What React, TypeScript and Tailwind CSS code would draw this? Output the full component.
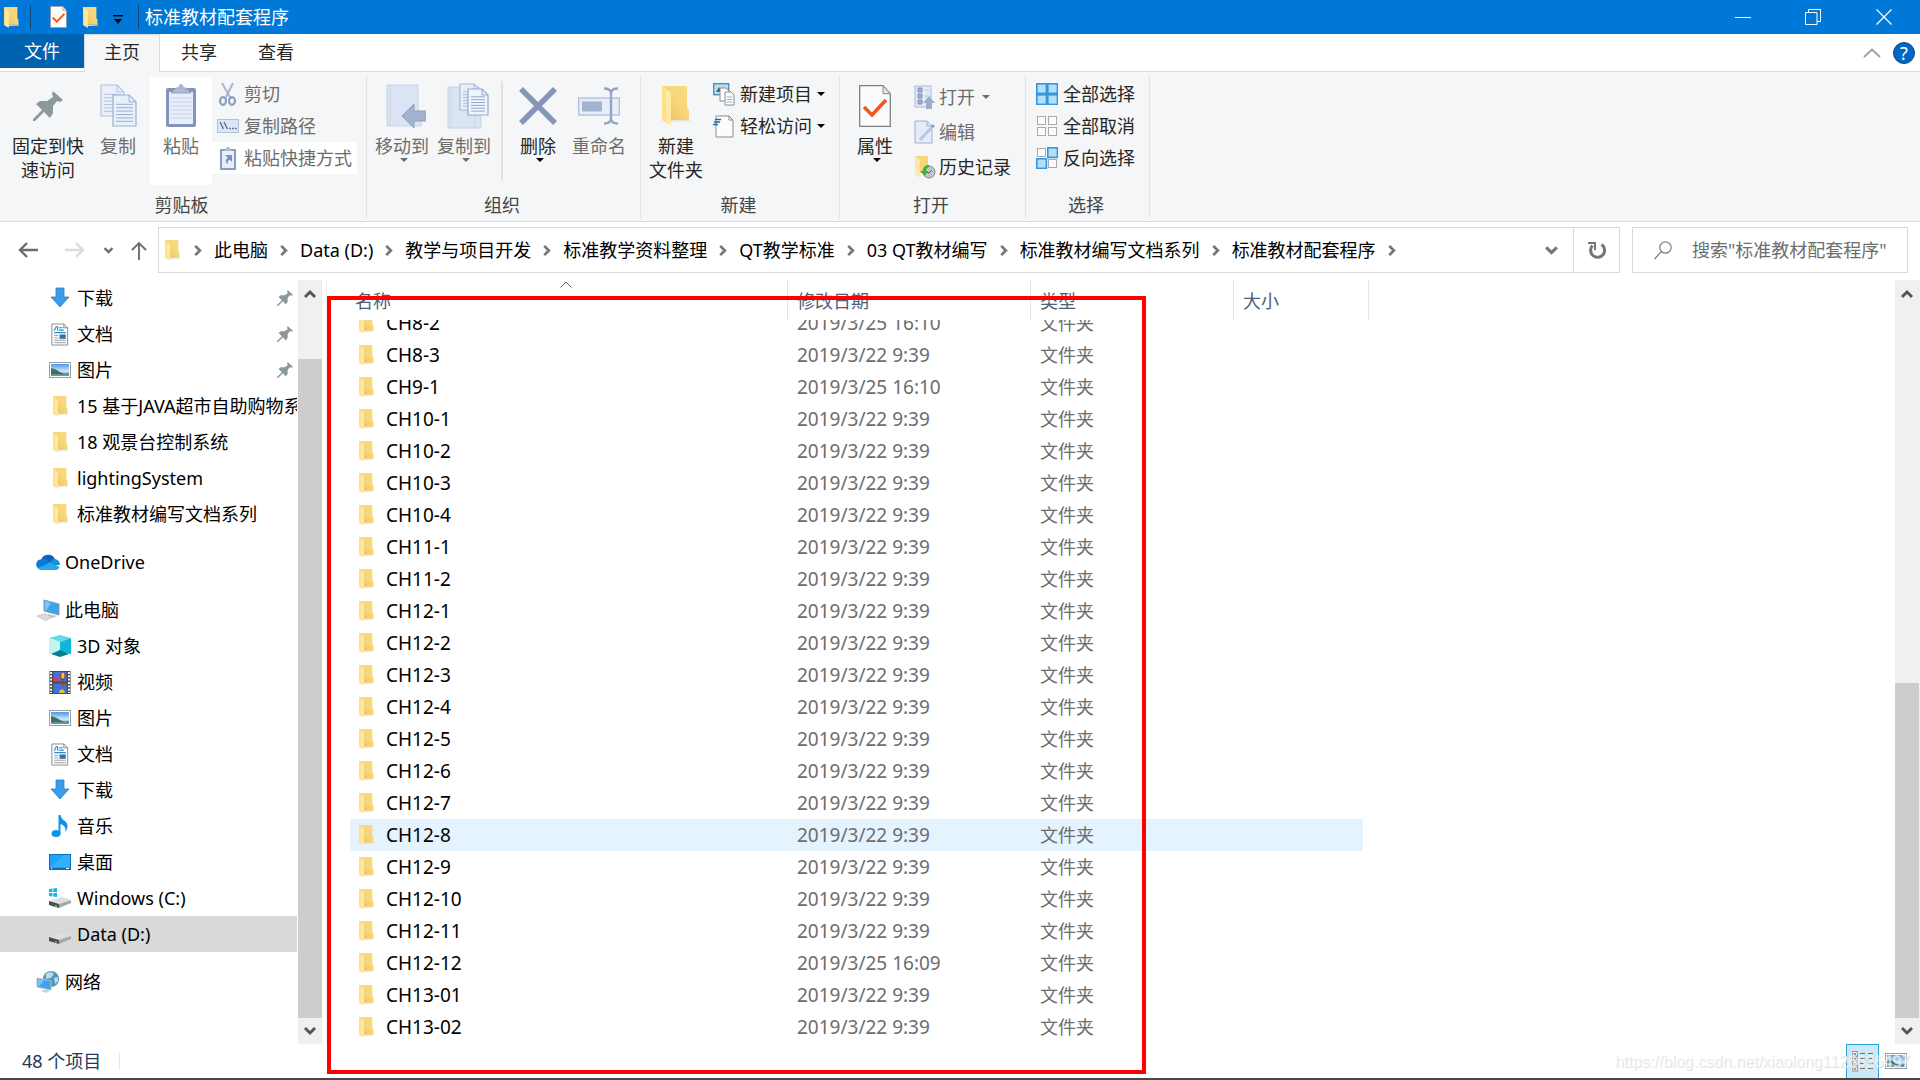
import React, { type ReactNode } from "react";

/* ---------- icons ---------- */

function Folder({ className = "h-[21px] w-[15px]" }: { className?: string }) {
  return (
    <svg viewBox="0 0 28 40" preserveAspectRatio="none" className={`shrink-0 ${className}`} aria-hidden="true">
      <defs>
        <linearGradient id="folderBack" x1="0" y1="1" x2="1" y2="0">
          <stop offset="0" stopColor="#e9bf57" />
          <stop offset="0.5" stopColor="#f6d577" />
          <stop offset="1" stopColor="#fbdc84" />
        </linearGradient>
      </defs>
      <path d="M9 34h20v1l-20 1z" fill="#e4e2dc" />
      <path d="M0 0h25v22l2 2v10H8z" fill="url(#folderBack)" />
      <path d="M0 0l9 7v33l-9-6z" fill="#ffe9a4" />
      <path d="M0 0l4 3v34l-4-3z" fill="#ffe08a" />
    </svg>
  );
}

function Pin({ className }: { className: string }) {
  return (
    <svg viewBox="0 0 30 30" className={`shrink-0 ${className}`} aria-hidden="true">
      <path d="M20 0l10 9-3 2-3-1-4 5v7l-3 5-6-6-9 9-2 0 0-2 9-9-6-6 4-3 7 0 6-4-1-3z" fill="#8d989e" />
    </svg>
  );
}

function CheckDoc({ className }: { className: string }) {
  return (
    <svg viewBox="0 0 32 42" preserveAspectRatio="none" className={`shrink-0 ${className}`} aria-hidden="true">
      <path d="M.7.7H24l7.3 8v32.6H.7z" fill="#fcfcfd" stroke="#7f8083" strokeWidth="1.3" />
      <path d="M24 .7v8h7.3z" fill="#e3e5e8" stroke="#8b8c8f" />
      <path d="M5 22l8 8L27 15" fill="none" stroke="#f2561b" strokeWidth="3.6" />
    </svg>
  );
}

function Paper({ x, y, w, h, stroke = "#9bafd2", fill = "#e9f0fa" }: { x: number; y: number; w: number; h: number; stroke?: string; fill?: string }) {
  const c = w * 0.3;
  const rows = [0.3, 0.41, 0.52, 0.63, 0.74, 0.85];
  return (
    <g stroke={stroke}>
      <path d={`M${x} ${y}h${w - c}l${c} ${c}v${h - c}h${-w}z`} fill={fill} strokeWidth="1.2" />
      <path d={`M${x + w - c} ${y}v${c}h${c}`} fill="none" />
      {rows.map((r) => (
        <path key={r} d={`M${x + 3} ${y + h * r}h${w - 6}`} strokeWidth="1" />
      ))}
    </g>
  );
}

const CopyIcon = () => (
  <svg viewBox="0 0 37 43" className="h-[43px] w-[37px]" aria-hidden="true">
    <Paper x={1} y={1} w={23} h={31} stroke="#b3c2dd" />
    <Paper x={13} y={11} w={23} h={31} />
  </svg>
);

const PasteIcon = () => (
  <svg viewBox="0 0 30 43" className="h-[43px] w-[30px]" aria-hidden="true">
    <rect x="0" y="4" width="30" height="39" rx="2" fill="#8495b8" />
    <rect x="3" y="8" width="24" height="32" fill="#e8effa" />
    <path d="M4 14h22M4 18h22M4 22h22M4 26h22M4 30h22M4 34h22" stroke="#c5d3e8" />
    <path d="M5 9l5-5h3c0-5 4-5 4 0h3l5 5z" fill="#aebbd3" stroke="#93a3c2" />
  </svg>
);

const MoveIcon = () => (
  <svg viewBox="-8 0 48 44" className="h-[44px] w-[48px]" aria-hidden="true">
    <path d="M1 1h31v24l3 3v14H1z" fill="#dae4f2" stroke="#c6d4e8" />
    <path d="M4 1v41" stroke="#c9d6ea" />
    <path d="M16 32l12-12v7h12v10H28v7z" fill="#a3b2cf" stroke="#8fa1c2" />
  </svg>
);

const CopyToIcon = () => (
  <svg viewBox="-8 0 50 46" className="h-[46px] w-[50px]" aria-hidden="true">
    <path d="M1 4h31v24l2 3v14H1z" fill="#dae4f2" stroke="#c6d4e8" />
    <path d="M4 4v41M28 32v13" stroke="#c9d6ea" />
    <Paper x={13} y={1} w={20} h={26} stroke="#a9bad9" />
    <Paper x={21} y={6} w={20} h={26} stroke="#93a9ce" fill="#f0f5fc" />
  </svg>
);

const DeleteIcon = () => (
  <svg viewBox="0 0 38 38" className="h-[38px] w-[38px]" aria-hidden="true">
    <path d="M2 2l34 34M36 2L2 36" stroke="#8495b5" strokeWidth="5.5" />
  </svg>
);

const RenameIcon = () => (
  <svg viewBox="0 0 42 38" className="h-[38px] w-[42px]" aria-hidden="true">
    <rect x=".7" y="11" width="40.6" height="17" fill="#e6eefa" stroke="#a9bad9" strokeWidth="1.2" />
    <rect x="4" y="14.500" width="20" height="10" fill="#a3b2cf" />
    <path d="M26 1.500q6 0 7 4 1-4 7-4M33 5v28M26 36.500q6 0 7-4 1 4 7 4" fill="none" stroke="#93a3c4" strokeWidth="2.4" />
  </svg>
);

const Scissors = () => (
  <svg viewBox="0 0 22 24" className="h-[24px] w-[22px]" aria-hidden="true">
    <path d="M5 1l9 16M16 1L8 17" stroke="#a9b6d0" strokeWidth="2" />
    <ellipse cx="6" cy="19" rx="3" ry="3.800" fill="none" stroke="#8e9fc1" strokeWidth="2.200" />
    <ellipse cx="15" cy="19" rx="3" ry="3.800" fill="none" stroke="#8e9fc1" strokeWidth="2.200" />
  </svg>
);

const PathIcon = () => (
  <svg viewBox="0 0 22 14" className="h-[14px] w-[22px]" aria-hidden="true">
    <rect x=".5" y=".5" width="21" height="13" fill="#dce7f5" stroke="#b1c0da" />
    <path d="M3 3l3.500 7M7 3l3.500 7" stroke="#5e6f93" strokeWidth="1.400" />
    <path d="M12 9.500h1.800M15 9.500h1.800M18 9.500h1.800" stroke="#5e6f93" strokeWidth="1.600" />
  </svg>
);

const ShortcutIcon = () => (
  <svg viewBox="0 0 22 24" className="h-[24px] w-[22px]" aria-hidden="true">
    <rect x="3" y="3" width="16" height="21" rx="1" fill="#8a9bbd" />
    <rect x="5" y="5" width="12" height="17" fill="#e8effa" />
    <path d="M6 5l3-2c0-3 4-3 4 0l3 2z" fill="#aebbd3" />
    <path d="M8 9h7v7l-2-2c-2 0-3 2-2 4-3-1-3-5 0-6z" fill="#7d90b6" />
  </svg>
);

const NewItemIcon = () => (
  <svg viewBox="0 0 22 23" className="h-[23px] w-[22px]" aria-hidden="true">
    <rect x=".7" y=".7" width="15" height="11" fill="#b8dff5" stroke="#4b91b8" strokeWidth="1.400" />
    <path d="M3 9l3-5 3 5z" fill="#3a6b54" />
    <path d="M7 5h6l3 3v10H7z" fill="#fff" stroke="#8b8c8f" />
    <path d="M12 9h6l3 3v10h-9z" fill="#fff" stroke="#8b8c8f" />
    <path d="M13.500 14h6M13.500 16.500h6M13.500 19h6" stroke="#8eb5e0" />
  </svg>
);

const EasyIcon = () => (
  <svg viewBox="0 0 22 23" className="h-[23px] w-[22px]" aria-hidden="true">
    <path d="M3 1h13l4 4v17H3z" fill="#fcfcfd" stroke="#8b8c8f" />
    <path d="M16 1v4h4" fill="none" stroke="#8b8c8f" />
    <path d="M2 4.500h6M1 7h6M0 9.500h5" stroke="#1768ae" strokeWidth="1.300" />
  </svg>
);

const OpenIcon = () => (
  <svg viewBox="0 0 22 24" className="h-[24px] w-[22px]" aria-hidden="true">
    <rect x="1" y="1" width="16" height="21" fill="#e3ebf7" stroke="#a9b9d6" />
    <path d="M4 3h4v4H4zM4 9h4v4H4zM4 15h4v4H4z" fill="#a3b2cf" stroke="#7f91b5" />
    <path d="M11 5h4M11 11h4" stroke="#b6c4dd" />
    <path d="M15 11l6 7h-3v6h-6v-6H9z" fill="#9dadcb" />
  </svg>
);

const EditIcon = () => (
  <svg viewBox="0 0 22 24" className="h-[24px] w-[22px]" aria-hidden="true">
    <path d="M1 1h12l5 5v17H1z" fill="#e3ecf8" stroke="#9fb2d3" />
    <path d="M13 1v5h5" fill="none" stroke="#9fb2d3" />
    <path d="M6 20L19 6" stroke="#b9c8e0" strokeWidth="3" />
    <path d="M18 7l2-2" stroke="#8ea0c2" strokeWidth="3" />
  </svg>
);

const HistoryIcon = () => (
  <svg viewBox="0 0 22 24" className="h-[24px] w-[22px]" aria-hidden="true">
    <path d="M1 1h13v17H5z" fill="#f6d577" />
    <path d="M1 1l5 4v18l-5-4z" fill="#ffe9a4" />
    <circle cx="15" cy="17" r="6" fill="#c3c6c9" stroke="#83878b" />
    <path d="M12 17l3 1 3-3" fill="none" stroke="#55595d" />
    <path d="M15 10c-4 0-6 2-6 6H6l5 5 3-5h-2c0-2 1-3 3-4z" fill="#35b440" />
  </svg>
);

function Tiles({ on }: { on: [boolean, boolean, boolean, boolean] }) {
  const spots = [[1, 1], [12, 1], [1, 12], [12, 12]];
  return (
    <svg viewBox="0 0 22 22" className="h-[22px] w-[22px]" aria-hidden="true">
      {spots.map(([x, y], i) => (
        <rect
          key={i}
          x={on[i] ? x - 0.2 : x + 0.5}
          y={on[i] ? y - 0.2 : y + 0.5}
          width={on[i] ? 9.6 : 8}
          height={on[i] ? 9.6 : 8}
          fill={on[i] ? "#b5defa" : "#fcfcfd"}
          stroke={on[i] ? "#3595de" : "#a9abad"}
          strokeWidth={on[i] ? 1.6 : 1}
        />
      ))}
    </svg>
  );
}

const DownloadIcon = () => (
  <svg viewBox="0 0 22 22" className="h-[22px] w-[22px]" aria-hidden="true">
    <path d="M7 1h8v9h5l-9 10-9-10h5z" fill="#3b9be9" stroke="#2b80c8" strokeWidth=".8" />
  </svg>
);

const DocIcon = () => (
  <svg viewBox="0 0 22 24" className="h-[23px] w-[22px]" aria-hidden="true">
    <path d="M2.500 1H15l4 4v18H2.500z" fill="#fdfdfd" stroke="#8a8c8f" />
    <path d="M15 1v4h4" fill="none" stroke="#8a8c8f" />
    <path d="M5 8l2-4h1.500v4M10 5h4M10 7.500h5M5 10h12" stroke="#2a8fd0" fill="none" strokeWidth="1.200" />
    <path d="M5 13h4M5 15.500h4M5 18h12M5 20.500h12" stroke="#9a9c9f" />
    <rect x="10.500" y="12" width="6.500" height="4.500" fill="#3c719f" />
  </svg>
);

const PictureIcon = () => (
  <svg viewBox="0 0 22 16" className="h-[16px] w-[22px]" aria-hidden="true">
    <defs>
      <linearGradient id="sky" x1="0" y1="0" x2="0" y2="1">
        <stop offset="0" stopColor="#4d97e8" />
        <stop offset=".6" stopColor="#cfe6fa" />
        <stop offset="1" stopColor="#5690b5" />
      </linearGradient>
    </defs>
    <rect x=".5" y=".5" width="21" height="15" fill="#fff" stroke="#9b9da0" />
    <rect x="2" y="2" width="18" height="12" fill="url(#sky)" />
    <path d="M2 6q5 1 9 4t9 1v1.500H2z" fill="#3e7260" />
  </svg>
);

const OneDriveIcon = () => (
  <svg viewBox="0 0 24 16" className="h-[16px] w-[24px]" aria-hidden="true">
    <path d="M5 6a7.500 7.500 0 0 1 14-1l-5 6z" fill="#0a63bd" />
    <path d="M5 5.500Q8 4 11 6l5 3-13 6A5 5 0 0 1 5 5.500z" fill="#0c7ad5" />
    <path d="M15 7q2-2.500 5-1.800Q24 7 24 11l-9 1z" fill="#1490df" />
    <path d="M2 14L14 8.500 23.500 13q-1 3-4 3H5q-2 0-3-2z" fill="#28a8ea" />
  </svg>
);

const ComputerIcon = () => (
  <svg viewBox="0 0 24 22" className="h-[22px] w-[24px]" aria-hidden="true">
    <path d="M8 1l15 4v11L8 12z" fill="#3ba4f0" stroke="#8e9aa5" />
    <path d="M9 2l6 2-5 8-1-.5z" fill="#7cc4f7" />
    <path d="M12 15l10 2-6 2-5-2z" fill="#c5cad0" />
    <path d="M1 17l8-2 7 3-6 3.500z" fill="#d9dce0" stroke="#abb1b8" strokeWidth=".6" />
  </svg>
);

const CubeIcon = () => (
  <svg viewBox="0 0 22 22" className="h-[22px] w-[22px]" aria-hidden="true">
    <path d="M0 3l11-3 11 3-11 4z" fill="#63d8e6" />
    <path d="M0 3l11 4v10L0 19z" fill="#c4f3f2" />
    <path d="M22 3L11 7v10l11 2z" fill="#12b6dc" />
    <path d="M2 19l9-4 9 4-9 3z" fill="#087f91" />
  </svg>
);

const VideoIcon = () => (
  <svg viewBox="0 0 22 24" className="h-[23px] w-[22px]" aria-hidden="true">
    <rect width="22" height="24" fill="#4a4a4c" />
    <path d="M1.700 1v22M20.300 1v22" stroke="#fff" strokeWidth="2" strokeDasharray="2 1.500" />
    <rect x="4" y="1" width="14" height="10" fill="#4174d8" />
    <rect x="4" y="13" width="14" height="10" fill="#3f72d6" />
    <path d="M4 8q4-4 8 3H4z" fill="#c13f79" />
    <circle cx="14" cy="5" r="3.200" fill="#d43a22" />
    <ellipse cx="14" cy="5" rx="1.500" ry="3.200" fill="#f3cf2b" />
    <path d="M12 8h4l-1 2h-2z" fill="#2f6b35" />
    <path d="M12 13h5l-2 3h-1z" fill="#d43a22" />
    <path d="M10 23q0-4 3-4t3 4z" fill="#eebb25" />
  </svg>
);

const MusicIcon = () => (
  <svg viewBox="0 0 22 22" className="h-[22px] w-[22px]" aria-hidden="true">
    <ellipse cx="7" cy="18.500" rx="4.500" ry="3.500" fill="#0f93e8" />
    <path d="M9.500 0h2q1 4 5 6.500 4 4 0 10.500 1-6-5-8v10h-2z" fill="#0f93e8" />
  </svg>
);

const DesktopIcon = () => (
  <svg viewBox="0 0 22 16" className="h-[16px] w-[22px]" aria-hidden="true">
    <rect x=".5" y=".5" width="21" height="15" fill="#1ea2fb" stroke="#0c6fb8" />
    <path d="M1 13L15 1h6v12z" fill="#35aefd" />
    <path d="M1 14.500h20" stroke="#0c6fb8" />
    <path d="M2 14.500h1M17 14.500h3" stroke="#fff" />
  </svg>
);

function DriveIcon({ windows = false }: { windows?: boolean }) {
  return (
    <svg viewBox="0 0 22 22" className="h-[22px] w-[22px]" aria-hidden="true">
      <path d="M0 14l13-4 9 3-12 4z" fill="#dddee0" />
      <path d="M0 14l10 3v4L0 18z" fill="#4a4c4e" />
      <path d="M10 17l12-4v3l-12 5z" fill="#a6a8ab" />
      <path d="M6 18.500l2 .6" stroke="#49d04e" strokeWidth="1.500" />
      {windows && <path d="M0 2l3.500-.5V5H0zM4.300 1.400L8 1v4H4.300zM0 6h3.500v3.500L0 9zM4.300 6H8v4l-3.700-.4z" fill="#14b4ec" />}
    </svg>
  );
}

const NetworkIcon = () => (
  <svg viewBox="0 0 24 22" className="h-[22px] w-[24px]" aria-hidden="true">
    <circle cx="15" cy="8" r="8" fill="#4d97bb" />
    <path d="M10 3q4-4 8 0l-3 4-5 1zM18 7l4-1v4l-3 3z" fill="#b5dcea" />
    <path d="M1 7l14 3v9L1 16z" fill="#3ba4f0" stroke="#b5bdc5" />
    <path d="M2 8l6 1.500L3 15.500H2z" fill="#79c3f7" />
    <path d="M5 20l5-2 4 2-4 2z" fill="#cdd1d6" />
  </svg>
);

function Chevron({ dir, className }: { dir: "right" | "down" | "up"; className: string }) {
  const d = dir === "right" ? "M3 2l5 5-5 5" : dir === "down" ? "M2 4l5 5 5-5" : "M2 10l5-5 5 5";
  return (
    <svg viewBox={dir === "right" ? "2 0 8 14" : "0 0 14 14"} className={`shrink-0 ${className}`} aria-hidden="true">
      <path d={d} fill="none" stroke="currentColor" strokeWidth="2.900" />
    </svg>
  );
}

function Caret({ className = "text-black" }: { className?: string }) {
  return (
    <svg viewBox="0 0 8 4" className={`h-[4px] w-[8px] shrink-0 ${className}`} aria-hidden="true">
      <path d="M0 0h8L4 4z" fill="currentColor" />
    </svg>
  );
}

/* ---------- ribbon ---------- */

function RibbonGroup({ label, className, children }: { label: string; className: string; children: ReactNode }) {
  return (
    <section aria-label={label} className={`flex shrink-0 flex-col border-r border-[#e2e3e4] pt-[2px] ${className}`}>
      <div className="flex h-[108px]">{children}</div>
      <div className="mt-2 pr-[3px] text-center leading-6 text-[#444]">{label}</div>
    </section>
  );
}

function BigButton({
  icon, lines, className, disabled = false, caret = false,
}: { icon: ReactNode; lines: string[]; className: string; disabled?: boolean; caret?: boolean }) {
  return (
    <button type="button" disabled={disabled} className={`flex h-[108px] shrink-0 flex-col items-center pt-[6px] ${disabled ? "text-[#6d6d6d]" : "text-[#262626]"} ${className}`}>
      <span className="flex h-[45px] items-center justify-center">{icon}</span>
      <span className="mt-[6px] flex flex-col whitespace-nowrap leading-6">
        {lines.map((l) => <span key={l}>{l}</span>)}
      </span>
      {caret && <Caret className={disabled ? "ml-1 text-[#6d6d6d]" : "ml-1 text-black"} />}
    </button>
  );
}

function SmallButton({
  icon, label, className = "h-8 gap-[5px]", disabled = false, caret = false,
}: { icon: ReactNode; label: string; className?: string; disabled?: boolean; caret?: boolean }) {
  return (
    <button type="button" disabled={disabled} className={`flex items-center whitespace-nowrap ${disabled ? "text-[#6d6d6d]" : "text-[#262626]"} ${className}`}>
      <span className="flex w-[22px] shrink-0 justify-center">{icon}</span>
      <span>{label}</span>
      {caret && <Caret className={disabled ? "ml-1 text-[#6d6d6d]" : "text-black"} />}
    </button>
  );
}

function Ribbon() {
  return (
    <div className="flex h-[150px] shrink-0 border-b border-[#d9dadb] bg-[#f5f6f7] pt-[3px] pb-[3px]">
      <RibbonGroup label="剪贴板" className="w-[367px]">
        <BigButton className="w-24" icon={<Pin className="h-[30px] w-[30px]" />} lines={["固定到快", "速访问"]} />
        <BigButton className="w-11" disabled icon={<CopyIcon />} lines={["复制"]} />
        <BigButton className="ml-[10px] w-[62px] bg-white" disabled icon={<PasteIcon />} lines={["粘贴"]} />
        <div className="mt-px flex w-[145px] flex-col">
          <SmallButton className="h-8 gap-[5px] pl-[5px]" disabled icon={<Scissors />} label="剪切" />
          <SmallButton className="h-8 gap-[5px] pl-[5px]" disabled icon={<PathIcon />} label="复制路径" />
          <SmallButton className="h-8 gap-[5px] bg-white pl-[5px]" disabled icon={<ShortcutIcon />} label="粘贴快捷方式" />
        </div>
      </RibbonGroup>
      <RibbonGroup label="组织" className="w-[274px]">
        <BigButton className="ml-1 w-[62px]" disabled caret icon={<MoveIcon />} lines={["移动到"]} />
        <BigButton className="w-[62px]" disabled caret icon={<CopyToIcon />} lines={["复制到"]} />
        <div className="mx-[6px] mt-1 h-[100px] w-[2px] bg-[#e0e1e3]" />
        <BigButton className="w-[58px]" caret icon={<DeleteIcon />} lines={["删除"]} />
        <BigButton className="w-[64px]" disabled icon={<RenameIcon />} lines={["重命名"]} />
      </RibbonGroup>
      <RibbonGroup label="新建" className="w-[199px]">
        <BigButton className="ml-[3px] w-16" icon={<Folder className="h-[40px] w-[28px]" />} lines={["新建", "文件夹"]} />
        <div className="mt-px ml-[5px] flex flex-col">
          <SmallButton caret icon={<NewItemIcon />} label="新建项目" />
          <SmallButton caret icon={<EasyIcon />} label="轻松访问" />
        </div>
      </RibbonGroup>
      <RibbonGroup label="打开" className="w-[186px]">
        <BigButton className="ml-1 w-[62px]" caret icon={<CheckDoc className="h-[42px] w-[32px]" />} lines={["属性"]} />
        <div className="mt-[2px] ml-2 flex flex-col">
          <SmallButton className="h-[35px] gap-[3px]" disabled caret icon={<OpenIcon />} label="打开" />
          <SmallButton className="h-[35px] gap-[3px]" disabled icon={<EditIcon />} label="编辑" />
          <SmallButton className="h-[35px] gap-[3px]" icon={<HistoryIcon />} label="历史记录" />
        </div>
      </RibbonGroup>
      <RibbonGroup label="选择" className="w-[124px]">
        <div className="mt-px ml-[10px] flex flex-col">
          <SmallButton icon={<Tiles on={[true, true, true, true]} />} label="全部选择" />
          <SmallButton icon={<Tiles on={[false, false, false, false]} />} label="全部取消" />
          <SmallButton icon={<Tiles on={[false, true, true, false]} />} label="反向选择" />
        </div>
      </RibbonGroup>
    </div>
  );
}

/* ---------- window chrome ---------- */

function TitleBar() {
  return (
    <header className="flex h-[34px] shrink-0 items-center bg-[#0078d7] pl-1 text-white">
      <Folder />
      <span className="ml-[11px] h-6 w-px bg-[#10467a]" />
      <button type="button" aria-label="属性" className="ml-[19px]"><CheckDoc className="h-[22px] w-[17px]" /></button>
      <button type="button" aria-label="新建文件夹" className="ml-4"><Folder /></button>
      <button type="button" aria-label="自定义快速访问工具栏" className="ml-[15px] pt-1">
        <svg viewBox="0 0 10 9" className="h-[9px] w-[10px]" aria-hidden="true"><path d="M0 .7h10" stroke="#000" strokeWidth="1.400" /><path d="M1 4h8L5 9z" /></svg>
      </button>
      <span className="ml-[15px] h-6 w-px bg-[#10467a]" />
      <h1 className="ml-[6px] leading-6">标准教材配套程序</h1>
      <div className="ml-auto flex h-full">
        <button type="button" aria-label="最小化" className="flex w-[70px] items-center justify-center">
          <span className="h-px w-4 bg-white" />
        </button>
        <button type="button" aria-label="还原" className="flex w-[70px] items-center justify-center">
          <svg viewBox="0 0 16 16" className="h-4 w-4" aria-hidden="true"><path d="M.5 3.500h11.500v12H.5zM3.500 3.500v-3h12v12H12" fill="none" stroke="#fff" /></svg>
        </button>
        <button type="button" aria-label="关闭" className="flex w-[72px] items-center justify-center">
          <svg viewBox="0 0 16 16" className="h-4 w-4" aria-hidden="true"><path d="M.5.5l15 15M15.500.5l-15 15" stroke="#fff" strokeWidth="1.200" /></svg>
        </button>
      </div>
    </header>
  );
}

function TabBar() {
  return (
    <div className="flex h-[38px] shrink-0 border-b border-[#d9dadb] bg-white text-[#262626]">
      <button type="button" className="h-[34px] w-[84px] bg-[#0063b1] text-white">文件</button>
      <button type="button" className="-mb-px h-[38px] w-[76px] border-x border-t border-[#d9dadb] bg-[#f5f6f7] pb-[3px]">主页</button>
      <button type="button" className="w-[78px] pb-[2px]">共享</button>
      <button type="button" className="w-[76px] pb-[2px]">查看</button>
      <div className="ml-auto flex items-center gap-[12px] pr-[5px]">
        <button type="button" aria-label="最小化功能区">
          <svg viewBox="0 0 18 10" className="h-[10px] w-[18px]" aria-hidden="true"><path d="M1 9l8-7.500L17 9" fill="none" stroke="#a0a0a0" strokeWidth="2" /></svg>
        </button>
        <button type="button" aria-label="帮助" className="flex h-[22px] w-[22px] items-center justify-center rounded-full border border-[#0a4a86] bg-[#0067c5] text-[18px] leading-none text-white">?</button>
      </div>
    </div>
  );
}

const crumbs = ["此电脑", "Data (D:)", "教学与项目开发", "标准教学资料整理", "QT教学标准", "03 QT教材编写", "标准教材编写文档系列", "标准教材配套程序"];

function AddressRow() {
  return (
    <div className="flex h-[58px] shrink-0 items-center bg-white pt-[2px] pr-3 pb-[4px] pl-[18px]">
      <button type="button" aria-label="返回" className="text-[#6d6d6d]">
        <svg viewBox="0 0 20 16" className="h-4 w-5" aria-hidden="true"><path d="M20 8H2M9 1L2 8l7 7" fill="none" stroke="currentColor" strokeWidth="2.400" /></svg>
      </button>
      <button type="button" aria-label="前进" disabled className="ml-[27px] text-[#dcdcdc]">
        <svg viewBox="0 0 20 16" className="h-4 w-5" aria-hidden="true"><path d="M0 8h18M11 1l7 7-7 7" fill="none" stroke="currentColor" strokeWidth="2.400" /></svg>
      </button>
      <button type="button" aria-label="最近浏览的位置" className="ml-[18px] text-[#6d6d6d]"><Chevron dir="down" className="h-[11px] w-[11px]" /></button>
      <button type="button" aria-label="上移" className="ml-[17px] text-[#6d6d6d]">
        <svg viewBox="0 0 16 19" className="h-[19px] w-4" aria-hidden="true"><path d="M8 19V2M1 9l7-7 7 7" fill="none" stroke="currentColor" strokeWidth="1.900" /></svg>
      </button>
      <div className="ml-[11px] flex h-[46px] min-w-0 flex-1 items-center border border-[#d9d9d9] pl-[6px]">
        <Folder className="h-[21px] w-[15px]" />
        <nav aria-label="地址" className="ml-[2px] flex min-w-0 flex-1 items-center overflow-hidden whitespace-nowrap text-black">
          {crumbs.map((c) => (
            <span key={c} className="flex items-center">
              <Chevron dir="right" className="mx-3 h-[13px] w-[8px] text-[#767676]" />
              <a href="#" className="leading-6">{c}</a>
            </span>
          ))}
          <Chevron dir="right" className="ml-3 h-[13px] w-[8px] text-[#767676]" />
        </nav>
        <button type="button" aria-label="以前的位置" className="mr-[14px] text-[#767676]"><Chevron dir="down" className="h-[15px] w-[15px]" /></button>
        <button type="button" aria-label="刷新" className="flex h-full w-[46px] items-center justify-center border-l border-[#d9d9d9] text-[#767676]">
          <svg viewBox="0 0 18 18" className="h-[18px] w-[18px]" aria-hidden="true"><path d="M4.500 4.500a7 7 0 1 0 9-1" fill="none" stroke="currentColor" strokeWidth="3" /><path d="M0 1h8v8h-2V3H0z" fill="currentColor" /></svg>
        </button>
      </div>
      <label className="ml-3 flex h-[46px] w-[276px] shrink-0 items-center border border-[#d9d9d9] pl-[21px]">
        <svg viewBox="0 0 18 19" className="h-[19px] w-[18px] shrink-0" aria-hidden="true"><circle cx="11.500" cy="6.500" r="5.700" fill="none" stroke="#808080" strokeWidth="1.200" /><path d="M7.500 10.500L.5 18" stroke="#808080" strokeWidth="1.300" /></svg>
        <input type="text" aria-label="搜索" placeholder={'搜索"标准教材配套程序"'} className="ml-[20px] min-w-0 flex-1 bg-transparent outline-none placeholder:text-[#6d6d6d]" />
      </label>
    </div>
  );
}

/* ---------- navigation pane ---------- */

function NavItem({ icon, label, root = false, pinned = false, selected = false }: { icon: ReactNode; label: string; root?: boolean; pinned?: boolean; selected?: boolean }) {
  return (
    <a href="#" className={`flex h-9 items-center whitespace-nowrap pr-1 ${root ? "gap-[5px] pl-9" : "gap-[6px] pl-[49px]"} ${selected ? "bg-[#d9d9d9]" : ""}`}>
      <span className={`flex shrink-0 justify-center ${root ? "w-6" : "w-[22px]"}`}>{icon}</span>
      <span>{label}</span>
      {pinned && <span className="ml-auto"><Pin className="h-4 w-4" /></span>}
    </a>
  );
}

function NavPane() {
  return (
    <nav aria-label="导航窗格" className="w-[297px] shrink-0 overflow-hidden text-black">
      <NavItem icon={<DownloadIcon />} label="下载" pinned />
      <NavItem icon={<DocIcon />} label="文档" pinned />
      <NavItem icon={<PictureIcon />} label="图片" pinned />
      <NavItem icon={<Folder />} label="15 基于JAVA超市自助购物系统" />
      <NavItem icon={<Folder />} label="18 观景台控制系统" />
      <NavItem icon={<Folder />} label="lightingSystem" />
      <NavItem icon={<Folder />} label="标准教材编写文档系列" />
      <div className="mt-3"><NavItem root icon={<OneDriveIcon />} label="OneDrive" /></div>
      <div className="mt-3">
        <NavItem root icon={<ComputerIcon />} label="此电脑" />
        <NavItem icon={<CubeIcon />} label="3D 对象" />
        <NavItem icon={<VideoIcon />} label="视频" />
        <NavItem icon={<PictureIcon />} label="图片" />
        <NavItem icon={<DocIcon />} label="文档" />
        <NavItem icon={<DownloadIcon />} label="下载" />
        <NavItem icon={<MusicIcon />} label="音乐" />
        <NavItem icon={<DesktopIcon />} label="桌面" />
        <NavItem icon={<DriveIcon windows />} label="Windows (C:)" />
        <NavItem selected icon={<DriveIcon />} label="Data (D:)" />
      </div>
      <div className="mt-3"><NavItem root icon={<NetworkIcon />} label="网络" /></div>
    </nav>
  );
}

function ScrollBar({ thumb }: { thumb: string }) {
  return (
    <div className="flex w-6 shrink-0 flex-col bg-[#f0f0f0] text-[#555]">
      <button type="button" aria-label="向上滚动" className="flex h-[28px] shrink-0 items-center justify-center"><Chevron dir="up" className="h-[14px] w-[14px]" /></button>
      <div className="flex flex-1 flex-col justify-end"><div className={`bg-[#cdcdcd] ${thumb}`} /></div>
      <button type="button" aria-label="向下滚动" className="flex h-[26px] shrink-0 items-center justify-center"><Chevron dir="down" className="h-[14px] w-[14px]" /></button>
    </div>
  );
}

/* ---------- file list ---------- */

const names = [
  "CH8-2", "CH8-3", "CH9-1", "CH10-1", "CH10-2", "CH10-3", "CH10-4", "CH11-1", "CH11-2", "CH12-1", "CH12-2", "CH12-3",
  "CH12-4", "CH12-5", "CH12-6", "CH12-7", "CH12-8", "CH12-9", "CH12-10", "CH12-11", "CH12-12", "CH13-01", "CH13-02",
];
const dates: Record<string, string> = { "CH8-2": "2019/3/25 16:10", "CH9-1": "2019/3/25 16:10", "CH12-12": "2019/3/25 16:09" };

function FileList() {
  return (
    <main className="relative flex min-w-0 flex-1 flex-col border-l border-[#f0f0f0]">
      <div className="flex h-10 shrink-0 text-[#4c607a]">
        <button type="button" className="relative w-[461px] border-r border-[#e5e5e5] pt-px pl-7 text-left">
          名称
          <svg viewBox="0 0 12 7" className="absolute top-[1px] left-[233px] h-[7px] w-3" aria-hidden="true"><path d="M.5 6.500L6 1l5.500 5.500" fill="none" stroke="#666" /></svg>
        </button>
        <button type="button" className="w-[243px] border-r border-[#e5e5e5] pt-px pl-[9px] text-left">修改日期</button>
        <button type="button" className="w-[203px] border-r border-[#e5e5e5] pt-px pl-[9px] text-left">类型</button>
        <button type="button" className="w-[135px] border-r border-[#e5e5e5] pt-px pl-[9px] text-left">大小</button>
      </div>
      <div className="flex min-h-0 flex-1 flex-col justify-end overflow-hidden pb-px pl-[23px]">
        <table className="w-[1013px] shrink-0 table-fixed border-collapse text-left">
          <colgroup>
            <col className="w-[447px]" />
            <col className="w-[243px]" />
            <col />
          </colgroup>
          <tbody>
            {names.map((n) => (
              <tr key={n} className={`h-8 ${n === "CH12-8" ? "bg-[#e5f3ff]" : ""}`}>
                <td className="p-0 pl-[9px]">
                  <a href="#" className="flex items-center gap-3 text-[19px] leading-8 text-black"><Folder />{n}</a>
                </td>
                <td className="p-0 text-[19px] leading-8 text-[#6d6d6d]">{dates[n] ?? "2019/3/22 9:39"}</td>
                <td className="p-0 leading-8 text-[#6d6d6d]">文件夹</td>
              </tr>
            ))}
          </tbody>
        </table>
      </div>
      <div aria-hidden="true" className="pointer-events-none absolute top-4 -bottom-[30px] left-0 z-10 w-[819px] border-4 border-[#ff0000]" />
    </main>
  );
}

function StatusBar() {
  return (
    <footer className="relative flex h-9 shrink-0 items-center border-b-2 border-[#444648] bg-white pl-[22px] text-[#1e395b]">
      <span>48 个项目</span>
      <span className="ml-[18px] h-[17px] w-px bg-[#e8e8e8]" />
      <div className="ml-auto flex h-full items-center pr-[13px]">
        <button type="button" aria-label="详细信息" className="flex h-full w-[33px] items-center justify-center border border-b-0 border-[#26a0da] bg-[#cce8f6]">
          <svg viewBox="0 0 22 21" className="h-[21px] w-[22px]" aria-hidden="true">
            {[0, 5, 10, 15].map((y) => <rect key={y} x=".8" y={y + 0.6} width="4.500" height="4.500" fill="#fff" stroke="#8b8d90" />)}
            <path d="M2 3h2" stroke="#4a78c0" strokeWidth="1.500" /><path d="M2 8h2" stroke="#4b9b55" strokeWidth="1.500" /><path d="M2 13h2" stroke="#c23b32" strokeWidth="1.500" /><path d="M2 18h2" stroke="#4b9b55" strokeWidth="1.500" />
            <path d="M8 2.500h5M16 2.500h5M8 7.500h5M16 7.500h5M8 12.500h5M16 12.500h5M8 17.500h5M16 17.500h5" stroke="#6b6d70" />
          </svg>
        </button>
        <button type="button" aria-label="大图标" className="ml-[6px]"><PictureIcon /></button>
      </div>
      <span className="pointer-events-none absolute top-[6px] right-[10px] font-['Liberation_Sans',sans-serif] text-[16px] leading-6 text-white/60 [text-shadow:1px_1px_1px_#dcdcdc]">https://blog.csdn.net/xiaolong1126626497</span>
    </footer>
  );
}

export default function App() {
  return (
    <div className="flex h-screen min-h-[1080px] flex-col overflow-hidden bg-white font-['Noto_Sans','Noto_Sans_CJK_SC',sans-serif] text-[18px] leading-6">
      <TitleBar />
      <TabBar />
      <Ribbon />
      <AddressRow />
      <div className="flex min-h-0 flex-1">
        <NavPane />
        <div className="ml-px flex"><ScrollBar thumb="h-[659px]" /></div>
        <div className="ml-1 flex min-w-0 flex-1">
          <FileList />
          <div className="flex border-r border-[#f0f0f0]"><ScrollBar thumb="h-[335px]" /></div>
        </div>
      </div>
      <StatusBar />
    </div>
  );
}
